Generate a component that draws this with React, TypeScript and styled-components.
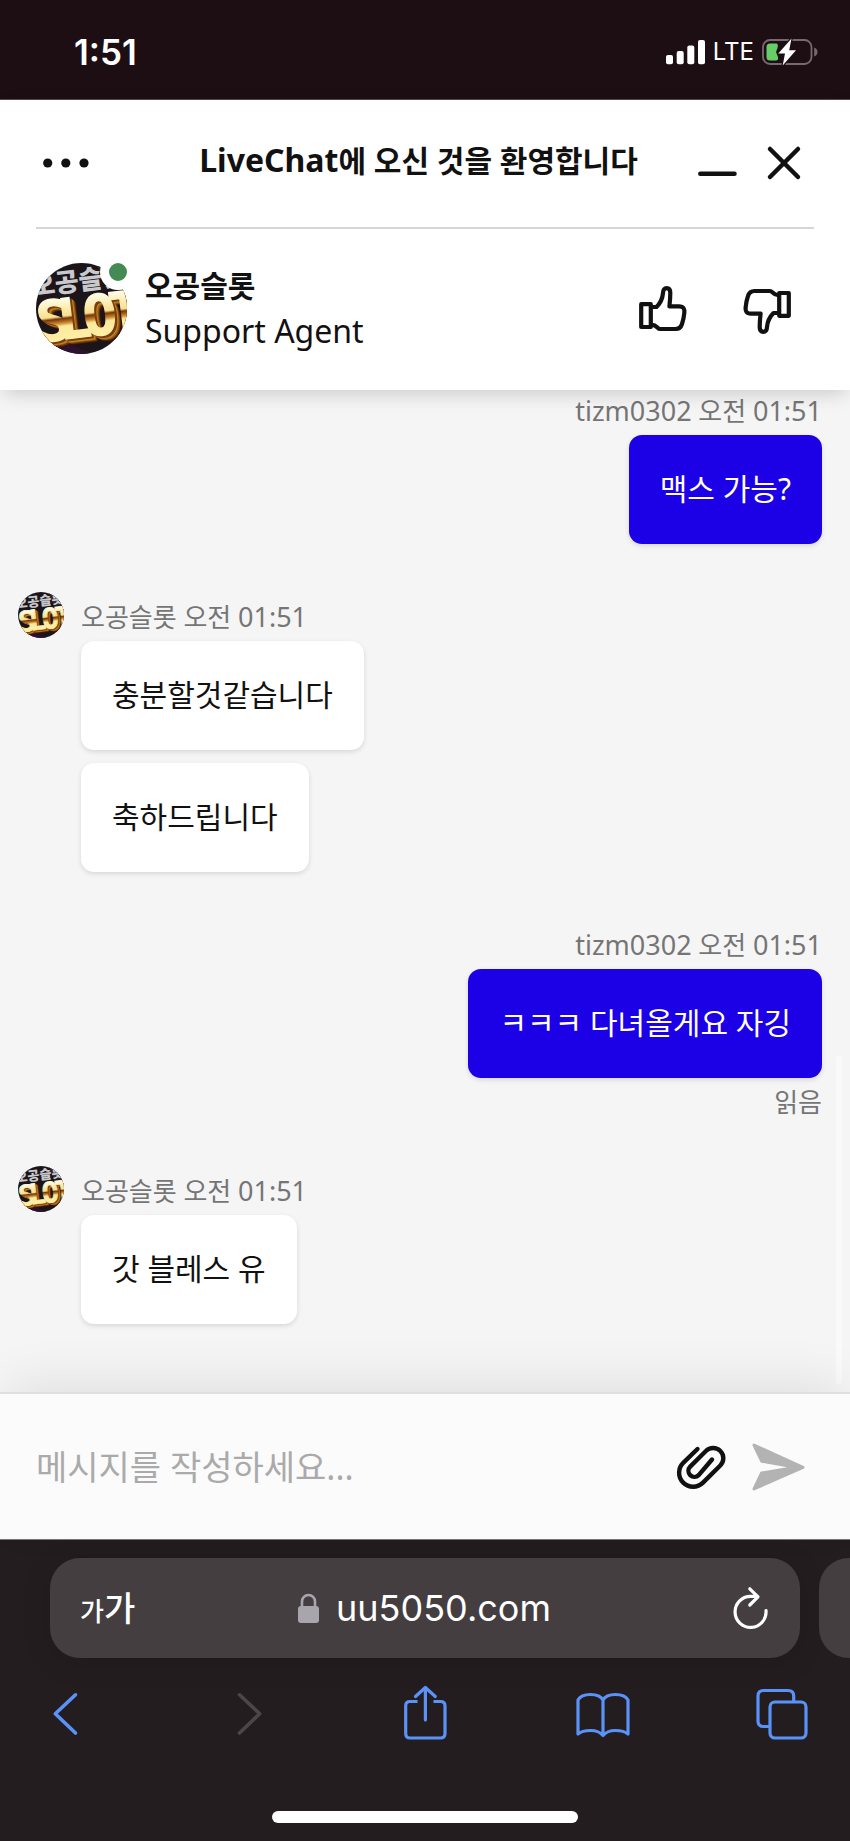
import React, { useId } from "react";
import styled, { createGlobalStyle, css } from "styled-components";

const GlobalStyle = createGlobalStyle`
  *, *::before, *::after { box-sizing: border-box; }
  body {
    margin: 0;
    background: #231d20;
    font-family: "Noto Sans", "Noto Sans CJK KR", sans-serif;
    color: #111;
  }
  button {
    display: flex;
    align-items: center;
    justify-content: center;
    padding: 0;
    border: 0;
    background: none;
    color: inherit;
    font: inherit;
    cursor: pointer;
  }
  svg { display: block; flex: none; overflow: visible; }
`;

const systemFont = css`
  font-family: Inter, "Noto Sans CJK KR", sans-serif;
`;

const Page = styled.div`
  display: flex;
  flex-direction: column;
  min-height: 100vh;
`;

/* Phone status bar */

const StatusBar = styled.div`
  ${systemFont}
  display: flex;
  align-items: center;
  justify-content: space-between;
  height: 100px;
  padding: 5px 32px 0 74px;
  background: #1d0e14;
  border-bottom: 1px solid #55494e;
  color: #fff;
`;

const Clock = styled.time`
  font-size: 35px;
  font-weight: 600;
  line-height: 40px;
`;

const StatusIcons = styled.div`
  display: flex;
  align-items: center;
  gap: 8px;
  font-size: 24px;
  line-height: 32px;
`;

/* Chat header */

const Header = styled.header`
  position: relative;
  z-index: 1;
  background: #fff;
  box-shadow: 0 6px 20px -4px rgba(0, 0, 0, 0.2);
`;

const TitleRow = styled.div`
  display: grid;
  grid-template-columns: 1fr auto 1fr;
  align-items: center;
  height: 127px;
  padding: 0 49px 1px 36px;
`;

const Title = styled.h1`
  margin: 0;
  padding-bottom: 5px;
  font-size: 30px;
  font-weight: 600;
  line-height: 44px;
  white-space: nowrap;
`;

const Brand = styled.span`
  font-size: 32px;
  font-weight: 700;
`;

const MenuButton = styled.button`
  justify-self: start;
  padding: 20px 6px;
`;

const WindowButtons = styled.div`
  display: flex;
  justify-self: end;
  gap: 30px;
`;

const Divider = styled.hr`
  height: 2px;
  margin: 0 36px;
  border: 0;
  background: #d6d6d6;
`;

const AgentRow = styled.div`
  display: flex;
  align-items: center;
  gap: 18px;
  height: 161px;
  padding: 0 59px 2px 36px;
`;

const AvatarFrame = styled.div`
  position: relative;
`;

const OnlineDot = styled.span`
  position: absolute;
  top: -9px;
  right: -9px;
  width: 36px;
  height: 36px;
  border: 9px solid #fff;
  border-radius: 50%;
  background: #438a55;
`;

const AgentText = styled.div`
  flex: 1;
  padding-bottom: 2px;
  font-size: 30px;
  line-height: 45px;
`;

const AgentName = styled.div`
  font-weight: 600;
`;

const AgentRole = styled.div`
  font-size: 32px;
`;

const RatingButtons = styled.div`
  display: flex;
  gap: 56px;
`;

/* Conversation */

const Conversation = styled.main`
  position: relative;
  flex: 1;
  display: flex;
  flex-direction: column;
  gap: 57px;
  padding: 5px 28px 68px 18px;
  background: #f5f5f5;
  overflow: hidden;
`;

const ScrollThumb = styled.div`
  position: absolute;
  right: 8px;
  bottom: 8px;
  width: 6px;
  height: 328px;
  border-radius: 3px;
  background: #fafafa;
`;

const Group = styled.section<{ $own?: boolean }>`
  display: flex;
  align-items: flex-start;
  justify-content: ${(p) => (p.$own ? "flex-end" : "flex-start")};
  gap: 17px;
`;

const AvatarSlot = styled.div`
  margin-top: -9px;
`;

const Stack = styled.div<{ $own?: boolean }>`
  display: flex;
  flex-direction: column;
  align-items: ${(p) => (p.$own ? "flex-end" : "flex-start")};
`;

const Meta = styled.div`
  height: 32px;
  font-size: 26px;
  line-height: 32px;
  color: #757575;
`;

const Latin = styled.span`
  font-size: 27px;
`;

const Bubble = styled.p<{ $own?: boolean }>`
  margin: 8px 0 0;
  padding: 31px 31px 33px;
  border-radius: 13px;
  font-size: 30px;
  line-height: 45px;
  color: ${(p) => (p.$own ? "#fff" : "#111")};
  background: ${(p) => (p.$own ? "#1c00e6" : "#fff")};
  box-shadow: 0 2px 5px rgba(0, 0, 0, 0.12);

  & + & { margin-top: 13px; }
`;

const Receipt = styled(Meta)`
  margin-top: 8px;
`;

/* Message composer */

const Composer = styled.form`
  position: relative;
  display: flex;
  align-items: center;
  height: 147px;
  padding: 0 45px 0 36px;
  border-top: 2px solid #dfdfdf;
  background: #fbfbfb;
  box-shadow: 0 -16px 52px -8px rgba(0, 0, 0, 0.09);
`;

const MessageInput = styled.input`
  flex: 1;
  min-width: 0;
  padding: 0;
  border: 0;
  outline: 0;
  background: none;
  font: inherit;
  font-size: 34px;
  line-height: 48px;
  color: #111;

  &::placeholder { color: #aaa; opacity: 1; }
`;

const ComposerButtons = styled.div`
  display: flex;
  align-items: center;
  gap: 26px;
`;

/* Browser chrome */

const BrowserBar = styled.footer`
  ${systemFont}
  padding-top: 18px;
  background: #231d20;
  border-top: 1px solid #777;
`;

const TabStrip = styled.div`
  display: flex;
  gap: 19px;
  padding-left: 50px;
`;

const AddressBar = styled.div`
  flex: 1;
  display: grid;
  grid-template-columns: 1fr auto 1fr;
  align-items: center;
  height: 100px;
  padding: 0 31px 0 30px;
  border-radius: 30px;
  background: #443e40;
  color: #fff;
  box-shadow: 0 4px 30px rgba(0, 0, 0, 0.12);
`;

const NextTab = styled.div`
  width: 31px;
  border-radius: 30px 0 0 30px;
  background: #443e40;
`;

const TextSizeButton = styled.button`
  && {
    justify-self: start;
    align-items: baseline;
    padding-top: 4px;
    font-weight: 500;
    font-size: 34px;
    line-height: 48px;
  }
`;

const SmallGlyph = styled.span`
  font-size: 26px;
`;

const SiteButton = styled.button`
  && {
    gap: 17px;
    font-size: 36px;
    line-height: 48px;
  }
`;

const ReloadButton = styled.button`
  justify-self: end;
`;

const Toolbar = styled.nav`
  display: flex;
  justify-content: space-between;
  padding: 29px 41px 0 38px;
  color: #5b92f7;
`;

const ToolButton = styled.button`
  width: 54px;
  height: 54px;

  &:disabled { color: #4b4648; }
`;

const HomeIndicator = styled.div`
  width: 36%;
  height: 12px;
  margin: 70px auto 18px;
  border-radius: 6px;
  background: #fff;
`;

function Avatar({ size }: { size: number }) {
  const id = useId();
  const letters = [
    { ch: "S", x: -1 },
    { ch: "L", x: 20 },
    { ch: "O", x: 46 },
    { ch: "T", x: 72 },
  ];
  const layers = [
    { dx: 6, dy: 6, fill: "#3b1705" },
    { dx: 5, dy: 5, fill: "#6a360c" },
    { dx: 4, dy: 4, fill: "#9a6118" },
    { dx: 3, dy: 3, fill: "#c08a2a" },
    { dx: 2, dy: 2, fill: "#7a3d0c" },
    { dx: 0, dy: 0, fill: `url(#${id}g)` },
  ];
  return (
    <svg width={size} height={size} viewBox="0 0 91 91" role="img" aria-label="오공슬롯">
      <defs>
        <clipPath id={`${id}c`}>
          <circle cx="45.5" cy="45.5" r="45.5" />
        </clipPath>
        <linearGradient id={`${id}g`} gradientUnits="userSpaceOnUse" x1="0" y1="34" x2="0" y2="76">
          <stop offset="0" stopColor="#fffbe0" />
          <stop offset="0.4" stopColor="#f8e08c" />
          <stop offset="0.46" stopColor="#7a360a" />
          <stop offset="0.56" stopColor="#c9842c" />
          <stop offset="0.64" stopColor="#fbe99c" />
          <stop offset="1" stopColor="#fff0a8" />
        </linearGradient>
      </defs>
      <g clipPath={`url(#${id}c)`}>
        <rect width="91" height="91" fill="#1b1519" />
        <path d="M0 66 L30 80 L58 91 H0Z" fill="#2d1230" />
        <path d="M60 0 H91 V30 L70 22Z" fill="#302a30" />
        <g transform="rotate(-7 45 45)">
          <text
            x="-2"
            y="27"
            fontFamily="Noto Sans CJK KR, sans-serif"
            fontWeight="900"
            fontSize="26"
            fill="#c9c9cd"
          >
            오공슬롯
          </text>
          <g fontFamily="DejaVu Sans Mono, monospace" fontWeight="700" fontSize="56">
            {layers.map((l) => (
              <g key={l.dx} fill={l.fill} stroke={l.fill} strokeWidth="1.4">
                {letters.map((c) => (
                  <text key={c.ch} x={c.x + l.dx} y={74 + l.dy}>
                    {c.ch}
                  </text>
                ))}
              </g>
            ))}
          </g>
        </g>
      </g>
    </svg>
  );
}

function ThumbIcon({ down }: { down?: boolean }) {
  return (
    <svg width="48" height="46" viewBox="0 0 48 46" fill="none" stroke="currentColor" strokeWidth="4.2" strokeLinejoin="round">
      <g transform={down ? "rotate(180 24 24)" : undefined}>
        <path d="M2.2 18.2H11.8V41H2.2Z" />
        <path d="M13 21H17.5C21 17.5 23.5 13 24 7C24 3.8 25.5 2.2 27.7 2.2C30.2 2.2 31.3 4 31.3 7C31.3 11 30.9 16 30.4 20.4H40C44.6 20.4 45.8 22.8 45.3 27C44.9 31 44.2 34.5 43 38C41.9 41.5 40 43 36.5 43H21C18.5 43 17.8 38.8 13 38.8" />
      </g>
    </svg>
  );
}

const strokeProps = {
  fill: "none",
  stroke: "currentColor",
  strokeLinecap: "round" as const,
  strokeLinejoin: "round" as const,
};

export default function App() {
  return (
    <Page>
      <GlobalStyle />
      <StatusBar>
        <Clock>1:51</Clock>
        <StatusIcons>
          <svg width="39" height="25" viewBox="0 0 39 25" fill="#fff">
            <rect x="0" y="15" width="7" height="9.3" rx="2" />
            <rect x="10.7" y="11" width="7" height="13.3" rx="2" />
            <rect x="21.3" y="5.5" width="7" height="18.8" rx="2" />
            <rect x="32" y="0" width="7" height="24.3" rx="2" />
          </svg>
          <span>LTE</span>
          <svg width="56" height="26" viewBox="0 0 56 26">
            <rect x="1" y="1" width="48.5" height="24" rx="7" fill="none" stroke="#77696f" strokeWidth="1.8" />
            <path d="M52.2 8.5C56.5 10 56.5 16 52.2 17.5Z" fill="#77696f" />
            <path d="M8 4.5H14.5Q16.5 5 15.5 9L14 13L16 18Q16.5 21.5 14 21.5H8Q4.5 21.5 4.5 18V8Q4.5 4.5 8 4.5Z" fill="#67ce67" />
            <path d="M29.5 -0.5L16.3 14.6H23L20.7 26.4L34 11.3H27.2Z" fill="#fff" stroke="#1d0e14" strokeWidth="2.6" paintOrder="stroke" strokeLinejoin="round" />
          </svg>
        </StatusIcons>
      </StatusBar>

      <Header>
        <TitleRow>
          <MenuButton aria-label="메뉴">
            <svg width="48" height="10" viewBox="0 0 48 10" fill="currentColor">
              <circle cx="5.7" cy="5" r="4.6" />
              <circle cx="23.8" cy="5" r="4.6" />
              <circle cx="42" cy="5" r="4.6" />
            </svg>
          </MenuButton>
          <Title>
            <Brand>LiveChat</Brand>에 오신 것을 환영합니다
          </Title>
          <WindowButtons>
            <button aria-label="최소화">
              <svg width="39" height="34" viewBox="0 0 39 34" strokeWidth="4.5" {...strokeProps}>
                <path d="M2.3 27.8H36.5" />
              </svg>
            </button>
            <button aria-label="닫기">
              <svg width="34" height="34" viewBox="0 0 34 34" strokeWidth="4.5" {...strokeProps}>
                <path d="M3 3L31 31M31 3L3 31" />
              </svg>
            </button>
          </WindowButtons>
        </TitleRow>
        <Divider />
        <AgentRow>
          <AvatarFrame>
            <Avatar size={91} />
            <OnlineDot />
          </AvatarFrame>
          <AgentText>
            <AgentName>오공슬롯</AgentName>
            <AgentRole>Support Agent</AgentRole>
          </AgentText>
          <RatingButtons>
            <button aria-label="좋아요">
              <ThumbIcon />
            </button>
            <button aria-label="싫어요">
              <ThumbIcon down />
            </button>
          </RatingButtons>
        </AgentRow>
      </Header>

      <Conversation>
        <Group $own>
          <Stack $own>
            <Meta>
              <Latin>tizm0302</Latin> 오전 <Latin>01:51</Latin>
            </Meta>
            <Bubble $own>맥스 가능?</Bubble>
          </Stack>
        </Group>
        <Group>
          <AvatarSlot>
            <Avatar size={46} />
          </AvatarSlot>
          <Stack>
            <Meta>
              오공슬롯 오전 <Latin>01:51</Latin>
            </Meta>
            <Bubble>충분할것같습니다</Bubble>
            <Bubble>축하드립니다</Bubble>
          </Stack>
        </Group>
        <Group $own>
          <Stack $own>
            <Meta>
              <Latin>tizm0302</Latin> 오전 <Latin>01:51</Latin>
            </Meta>
            <Bubble $own>ㅋㅋㅋ 다녀올게요 자깅</Bubble>
            <Receipt>읽음</Receipt>
          </Stack>
        </Group>
        <Group>
          <AvatarSlot>
            <Avatar size={46} />
          </AvatarSlot>
          <Stack>
            <Meta>
              오공슬롯 오전 <Latin>01:51</Latin>
            </Meta>
            <Bubble>갓 블레스 유</Bubble>
          </Stack>
        </Group>
        <ScrollThumb />
      </Conversation>

      <Composer onSubmit={(e) => e.preventDefault()}>
        <MessageInput type="text" aria-label="메시지" placeholder="메시지를 작성하세요..." />
        <ComposerButtons>
          <button type="button" aria-label="파일 첨부">
            <svg width="49" height="43" viewBox="0 0 49 43" strokeWidth="4.4" {...strokeProps}>
              <path d="M20.5 4L6.2 17.8A14 14 0 0 0 26 37.6L43.3 20.5A10.2 10.2 0 0 0 28.9 6L13.2 21.6A6 6 0 0 0 21.7 30.1L35 14.5" />
            </svg>
          </button>
          <button type="submit" aria-label="보내기">
            <svg width="53" height="48" viewBox="0 0 53 48" fill="#b3b3b3" stroke="#b3b3b3" strokeWidth="3" strokeLinejoin="round">
              <path d="M2 2L51 24.3L2 46L9.6 30L44 24.3L9.6 18.2Z" />
            </svg>
          </button>
        </ComposerButtons>
      </Composer>

      <BrowserBar>
        <TabStrip>
          <AddressBar>
            <TextSizeButton aria-label="텍스트 크기">
              <SmallGlyph>가</SmallGlyph>
              <span>가</span>
            </TextSizeButton>
            <SiteButton>
              <svg width="21" height="30" viewBox="0 0 21 30">
                <path d="M4 14V8.5A6.5 6.5 0 0 1 17 8.5V14" fill="none" stroke="#a9a5ad" strokeWidth="2.6" />
                <rect x="0" y="13" width="21" height="17" rx="3" fill="#a9a5ad" />
              </svg>
              uu5050.com
            </SiteButton>
            <ReloadButton aria-label="새로고침">
              <svg width="36" height="42" viewBox="0 0 36 42" strokeWidth="3.2" {...strokeProps}>
                <path d="M33 23.5A15.5 15.5 0 1 1 17.5 9.4H24.5" />
                <path d="M16.8 1.8L25 9.8L16.8 18" />
              </svg>
            </ReloadButton>
          </AddressBar>
          <NextTab />
        </TabStrip>
        <Toolbar aria-label="브라우저">
          <ToolButton aria-label="뒤로">
            <svg width="54" height="54" viewBox="0 0 54 54" strokeWidth="3.6" {...strokeProps}>
              <path d="M37.5 7.8L17.3 26.8L37.5 46" />
            </svg>
          </ToolButton>
          <ToolButton aria-label="앞으로" disabled>
            <svg width="54" height="54" viewBox="0 0 54 54" strokeWidth="3.6" {...strokeProps}>
              <path d="M22.5 7.8L42.7 26.8L22.5 46" />
            </svg>
          </ToolButton>
          <ToolButton aria-label="공유">
            <svg width="54" height="54" viewBox="0 0 54 54" strokeWidth="3.2" {...strokeProps}>
              <path d="M20.5 14.5H13Q8.7 14.5 8.7 18.8V46.5Q8.7 51 13 51H43.5Q48 51 48 46.5V18.8Q48 14.5 43.5 14.5H36.5" strokeLinecap="butt" />
              <path d="M28.4 33V1.5M18.5 9.5L28.4 0.5L38.3 9.5" />
            </svg>
          </ToolButton>
          <ToolButton aria-label="책갈피">
            <svg width="54" height="54" viewBox="0 0 54 54" strokeWidth="3.2" {...strokeProps}>
              <path d="M27 13Q24 7.5 14.5 7.5Q5 7.5 2 13V47Q6 43.5 14.5 43.5Q23 43.5 27 48.5Q31 43.5 39.5 43.5Q48 43.5 52 47V13Q49 7.5 39.5 7.5Q30 7.5 27 13V48.5" />
            </svg>
          </ToolButton>
          <ToolButton aria-label="탭">
            <svg width="54" height="54" viewBox="0 0 54 54" strokeWidth="3.2" {...strokeProps}>
              <path d="M13.5 39.5H8.5Q3 39.5 3 34V9Q3 3.5 8.5 3.5H33Q38.7 3.5 38.7 9V13.5" />
              <rect x="15" y="15" width="36" height="36" rx="5" />
            </svg>
          </ToolButton>
        </Toolbar>
        <HomeIndicator />
      </BrowserBar>
    </Page>
  );
}
